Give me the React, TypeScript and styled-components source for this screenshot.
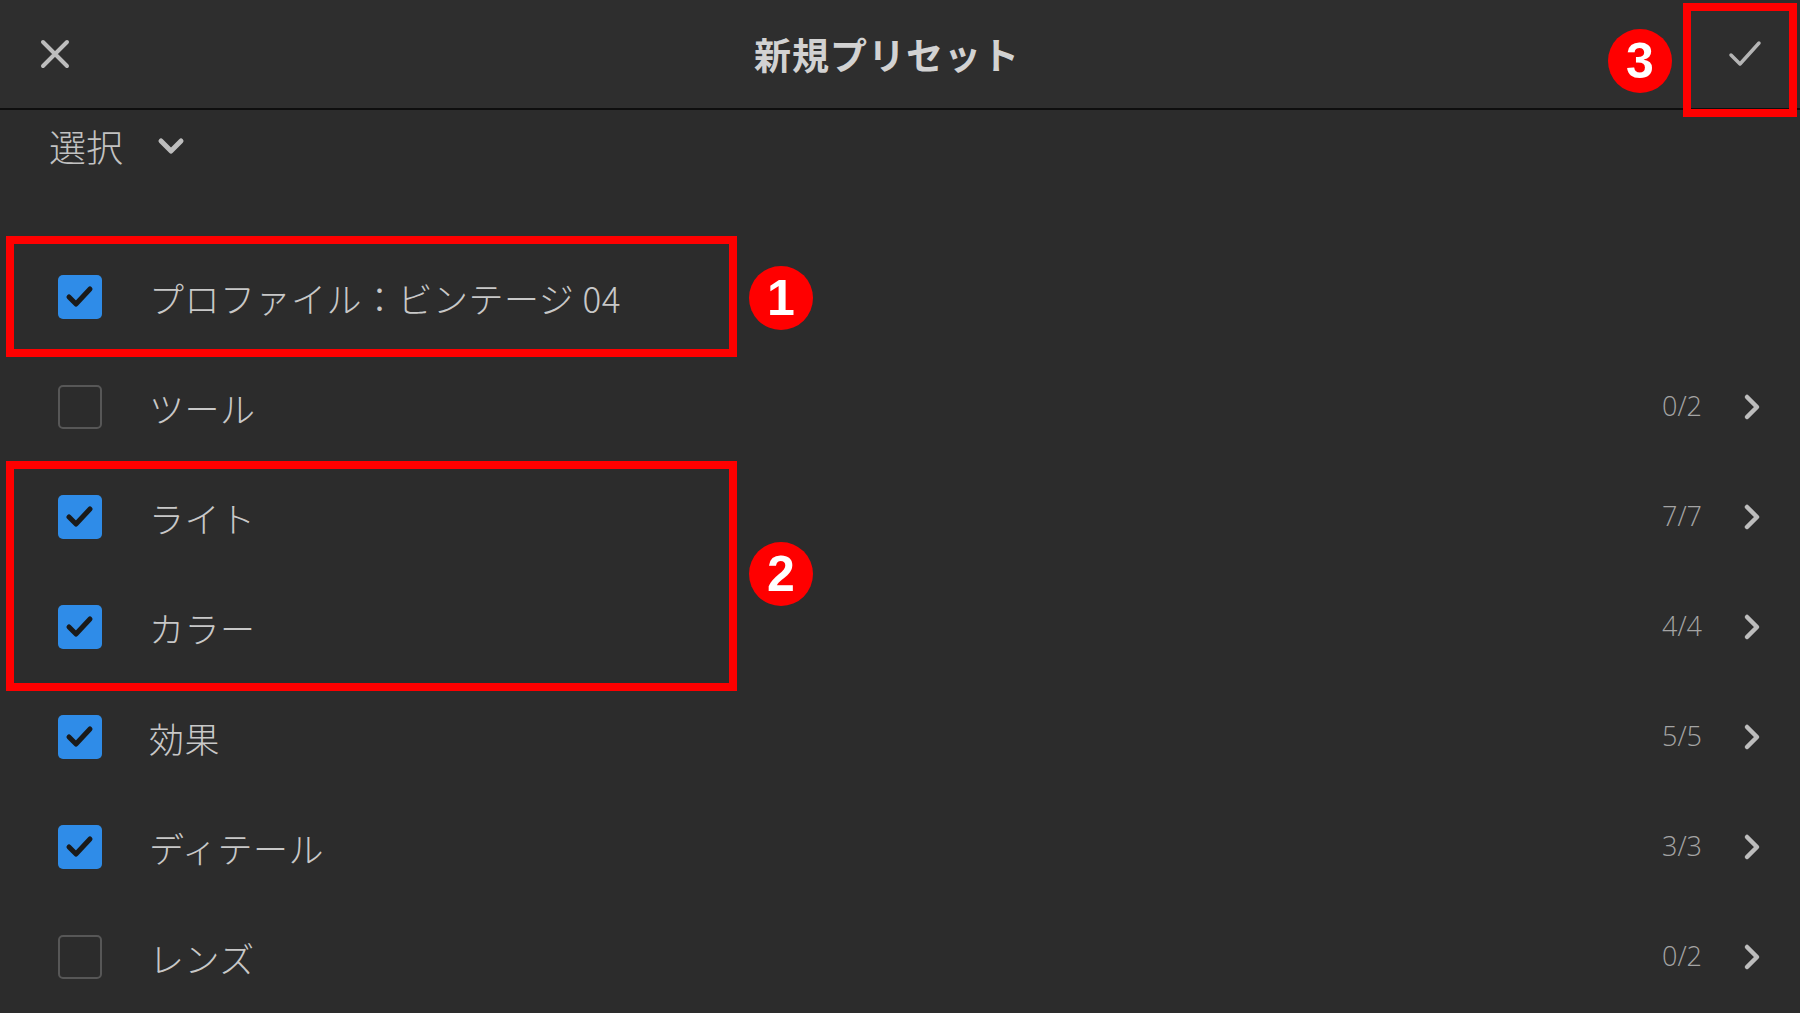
import React from "react";
import styled, { createGlobalStyle } from "styled-components";

const GlobalStyle = createGlobalStyle`
  html, body {
    margin: 0;
    padding: 0;
    background: #2c2c2c;
  }
  body {
    font-family: "Noto Sans CJK JP", "Noto Sans", sans-serif;
    color: #c4c4c4;
  }
`;

const Screen = styled.div`
  position: relative;
  width: 1800px;
  height: 1013px;
  overflow: hidden;
  background: #2c2c2c;
  display: flex;
  flex-direction: column;
`;

const Header = styled.div`
  height: 108px;
  flex-shrink: 0;
  display: grid;
  grid-template-columns: 110px 1fr 136px;
  align-items: center;
  border-bottom: 2px solid #0e0e0e;
  background: #2e2e2e;
`;

const IconButton = styled.div<{ $offset?: number }>`
  display: flex;
  align-items: center;
  justify-content: center;
  height: 100%;
  padding-left: ${(p) => p.$offset ?? 0}px;
`;

const Title = styled.div`
  text-align: center;
  font-size: 37px;
  font-weight: 700;
  color: #d2d2d2;
  letter-spacing: 1px;
`;

const SelectRow = styled.div`
  height: 72px;
  flex-shrink: 0;
  display: flex;
  align-items: center;
  gap: 34px;
  padding-left: 49px;
  padding-bottom: 2px;
  font-size: 37px;
  font-weight: 300;
  color: #c2c2c2;
`;

const List = styled.div`
  padding-top: 58px;
  display: flex;
  flex-direction: column;
`;

const Row = styled.div`
  height: 110px;
  display: flex;
  align-items: center;
  padding: 0 38px 0 58px;
`;

const Box = styled.div<{ $checked: boolean }>`
  width: 44px;
  height: 44px;
  box-sizing: border-box;
  border-radius: 5px;
  flex-shrink: 0;
  display: flex;
  align-items: center;
  justify-content: center;
  background: ${(p) => (p.$checked ? "#2f8ce8" : "transparent")};
  border: ${(p) => (p.$checked ? "none" : "2px solid #575757")};
`;

const Label = styled.div`
  margin-left: 47px;
  flex: 1;
  font-size: 35px;
  font-weight: 300;
  color: #c8c8c8;
  letter-spacing: 0.5px;
`;

const Count = styled.div`
  font-family: "Open Sans", "Noto Sans", sans-serif;
  font-size: 27px;
  font-weight: 300;
  color: #a4a4a4;
  margin-right: 40px;
  padding-bottom: 4px;
`;

const Frame = styled.div<{ $x: number; $y: number; $w: number; $h: number }>`
  position: absolute;
  left: ${(p) => p.$x}px;
  top: ${(p) => p.$y}px;
  width: ${(p) => p.$w}px;
  height: ${(p) => p.$h}px;
  box-sizing: border-box;
  border: 8px solid #ff0000;
`;

const Badge = styled.div<{ $x: number; $y: number }>`
  position: absolute;
  left: ${(p) => p.$x - 32}px;
  top: ${(p) => p.$y - 32}px;
  width: 64px;
  height: 64px;
  border-radius: 50%;
  background: #ff0000;
  color: #ffffff;
  display: flex;
  align-items: center;
  justify-content: center;
  font-family: "Liberation Sans", "Open Sans", sans-serif;
  font-weight: 700;
  font-size: 50px;
  line-height: 1;
`;

const CloseIcon = () => (
  <svg width="30" height="30" viewBox="0 0 30 30">
    <path d="M3 3 L27 27 M27 3 L3 27" stroke="#bdbdbd" strokeWidth="4" strokeLinecap="round" />
  </svg>
);

const DoneIcon = () => (
  <svg width="34" height="30" viewBox="0 0 34 30">
    <path d="M3 16 L12 25 L31 4" stroke="#b5b5b5" strokeWidth="3.5" fill="none" strokeLinecap="round" strokeLinejoin="round" />
  </svg>
);

const ChevronDown = () => (
  <svg width="28" height="20" viewBox="0 0 28 20">
    <path d="M4 5 L14 15 L24 5" stroke="#bdbdbd" strokeWidth="5" fill="none" strokeLinecap="round" strokeLinejoin="round" />
  </svg>
);

const ChevronRight = () => (
  <svg width="20" height="30" viewBox="0 0 20 30">
    <path d="M5 5 L15 15 L5 25" stroke="#bdbdbd" strokeWidth="4.5" fill="none" strokeLinecap="round" strokeLinejoin="round" />
  </svg>
);

const Tick = () => (
  <svg width="32" height="26" viewBox="0 0 32 26">
    <path d="M5 13 L12 20 L26 5" stroke="#1a1a1a" strokeWidth="5" fill="none" strokeLinecap="round" strokeLinejoin="round" />
  </svg>
);

type Item = { label: string; checked: boolean; count?: string };

const items: Item[] = [
  { label: "プロファイル：ビンテージ 04", checked: true },
  { label: "ツール", checked: false, count: "0/2" },
  { label: "ライト", checked: true, count: "7/7" },
  { label: "カラー", checked: true, count: "4/4" },
  { label: "効果", checked: true, count: "5/5" },
  { label: "ディテール", checked: true, count: "3/3" },
  { label: "レンズ", checked: false, count: "0/2" },
];

function App() {
  return (
    <Screen>
      <GlobalStyle />
      <Header>
        <IconButton>
          <CloseIcon />
        </IconButton>
        <Title>新規プリセット</Title>
        <IconButton $offset={26}>
          <DoneIcon />
        </IconButton>
      </Header>
      <SelectRow>
        <span>選択</span>
        <ChevronDown />
      </SelectRow>
      <List>
        {items.map((item) => (
          <Row key={item.label}>
            <Box $checked={item.checked}>{item.checked && <Tick />}</Box>
            <Label>{item.label}</Label>
            {item.count && (
              <>
                <Count>{item.count}</Count>
                <ChevronRight />
              </>
            )}
          </Row>
        ))}
      </List>

      <Frame $x={6} $y={236} $w={731} $h={121} />
      <Frame $x={6} $y={461} $w={731} $h={230} />
      <Frame $x={1683} $y={3} $w={114} $h={114} />
      <Badge $x={781} $y={298}>1</Badge>
      <Badge $x={781} $y={574}>2</Badge>
      <Badge $x={1640} $y={61}>3</Badge>
    </Screen>
  );
}

export default App;
